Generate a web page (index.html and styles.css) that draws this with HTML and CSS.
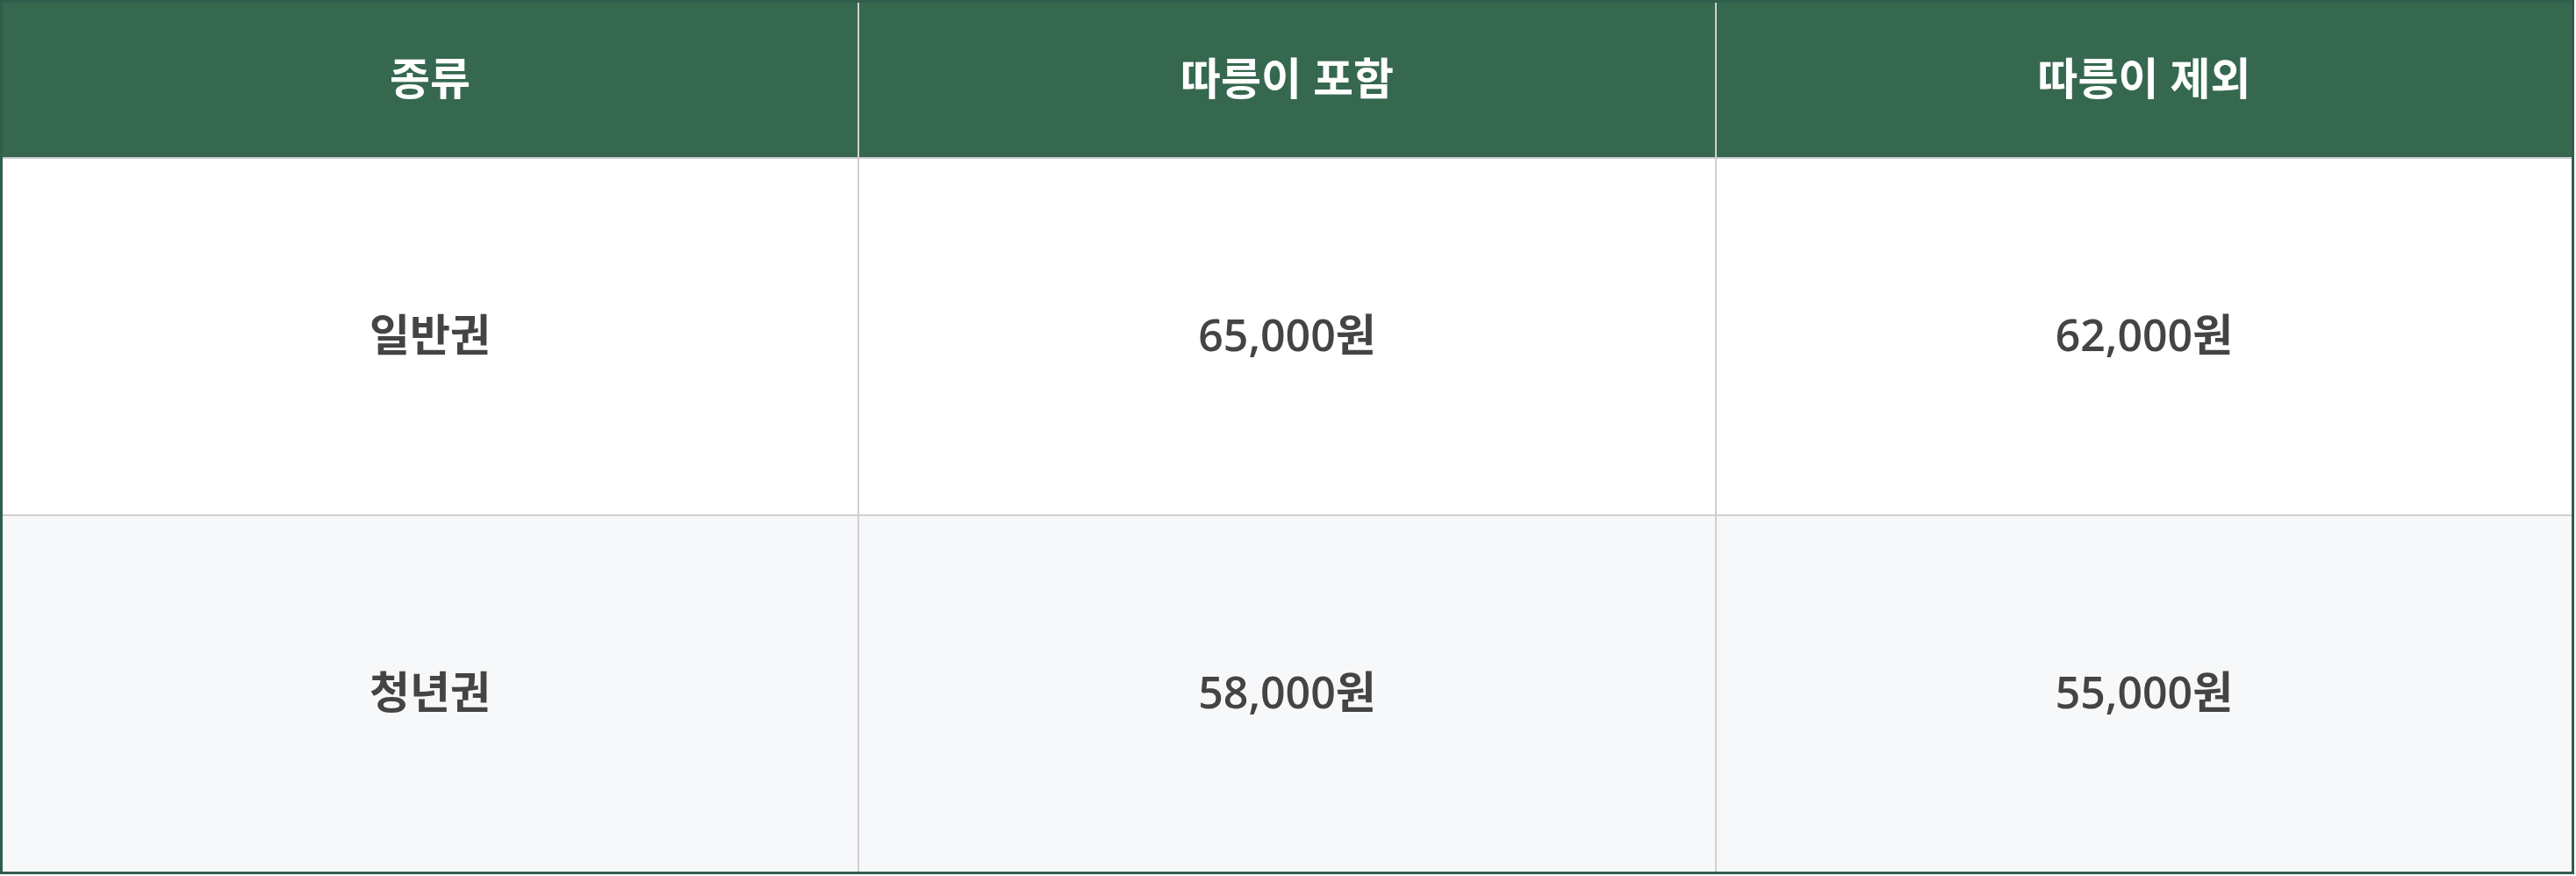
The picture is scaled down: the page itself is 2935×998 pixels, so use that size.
FILE: index.html
```html
<!DOCTYPE html>
<html lang="ko">
<head>
    <meta charset="UTF-8">
    <meta name="viewport" content="width=device-width, initial-scale=1.0">
    <title>요금표</title>
    <link rel="stylesheet" href="styles.css">
</head>
<body>
    <table class="price-table">
        <thead>
            <tr>
                <th>종류</th>
                <th>따릉이 포함</th>
                <th>따릉이 제외</th>
            </tr>
        </thead>
        <tbody>
            <tr>
                <td class="kind">일반권</td>
                <td>65,000원</td>
                <td>62,000원</td>
            </tr>
            <tr>
                <td class="kind">청년권</td>
                <td>58,000원</td>
                <td>55,000원</td>
            </tr>
        </tbody>
    </table>
</body>
</html>
```

FILE: styles.css
```css
body {
    margin: 0;
    font-family: "Open Sans", "Noto Sans CJK KR", sans-serif;
    background-color: #fff;
}
.price-table {
    width: 2933px;
    border-collapse: collapse;
    border: 3px solid #2f5e4c;
    table-layout: fixed;
}
.price-table th,
.price-table td {
    text-align: center;
    vertical-align: middle;
    font-size: 50px;
    font-weight: 600;
    border: 2px solid #d0d0d0;
    padding: 0 0 10px;
}
.price-table th {
    height: 166px;
    background-color: #35684f;
    color: #fff;
    border-top-color: #2f5e4c;
}
.price-table th:first-child,
.price-table td:first-child {
    border-left-color: #2f5e4c;
}
.price-table th:last-child,
.price-table td:last-child {
    border-right-color: #2f5e4c;
}
.price-table td {
    height: 395px;
    color: #444;
    background-color: #fff;
}
.price-table tbody tr:nth-child(even) td {
    background-color: #f7f8fa;
}
.price-table tbody tr:last-child td {
    border-bottom-color: #2f5e4c;
}
```
